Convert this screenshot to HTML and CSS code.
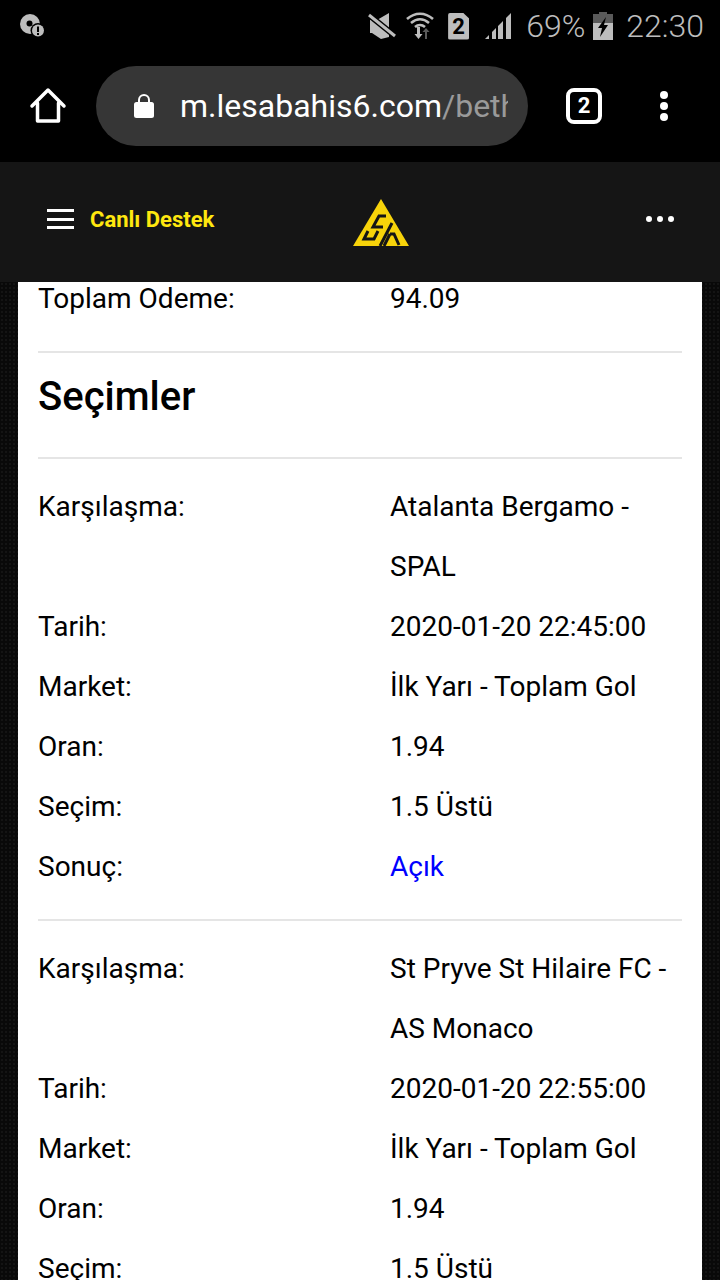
FILE: index.html
```html
<!DOCTYPE html>
<html lang="tr">
  <head>
    <meta charset="UTF-8" />
    <meta name="viewport" content="width=device-width, initial-scale=1.0" />
    <title>Kupon Detayı</title>
    <link rel="stylesheet" href="styles.css">
  </head>
  <body>
    <div class="status-bar">
      <svg class="status-alert" width="28" height="28" viewBox="0 0 28 28">
        <circle cx="11" cy="11" r="10" fill="#bdbdbd" />
        <circle cx="10.500" cy="10.500" r="3" fill="#000" />
        <circle cx="19" cy="17.500" r="7.500" fill="#000" />
        <circle cx="19" cy="17.500" r="6" fill="#bdbdbd" />
        <rect x="18" y="13.500" width="2" height="5.500" fill="#000" />
        <rect x="18" y="20" width="2" height="2" fill="#000" />
      </svg>
      <div class="status-right">
        <svg class="icon-mute" width="28" height="28" viewBox="0 0 28 28">
          <path d="M2 8h7l12-7v24l-8 2-9-6H2z" fill="#bdbdbd" />
          <path d="M1 3l26 21" stroke="#000" stroke-width="6" />
          <path d="M1 3l26 21" stroke="#bdbdbd" stroke-width="3" />
        </svg>
        <svg class="icon-wifi" width="28" height="28" viewBox="0 0 28 28">
          <path d="M1 7c8-7 18-7 26 0M5 11c6-5 12-5 18 0M9 15c3-2.500 7-2.500 10 0" fill="none" stroke="#bdbdbd" stroke-width="2.600" />
          <path d="M11 15h3v7h2.500l-4 5-4-5H11z" fill="#bdbdbd" />
          <path d="M19 27v-7h-2.500l3.500-4 3.500 4H21v7z" fill="#5a5a5a" />
        </svg>
        <div class="sim-card">2</div>
        <svg class="icon-signal" width="28" height="28" viewBox="0 0 28 28">
          <path d="M1 27l4-4v4zM8 27v-7l4-4v11zM14 27V14l5-5v18zM22 27V6l5-5v26z" fill="#bdbdbd" />
        </svg>
        <span class="battery-level">69%</span>
        <svg class="icon-battery" width="20" height="28" viewBox="0 0 20 28">
          <path d="M6 0h8v2h6v26H0V2h6z" fill="#5a5a5a" />
          <path d="M0 11h20v17H0z" fill="#bdbdbd" />
          <path d="M13 5L5 16h4l-2 9 8-12h-4z" fill="#000" />
        </svg>
        <span class="clock">22:30</span>
      </div>
    </div>

    <div class="browser-bar">
      <svg class="home-icon" width="38" height="38" viewBox="0 0 38 38">
        <path d="M3 19L19 3l16 16M8.500 16v18h21V16" fill="none" stroke="#fff" stroke-width="3.500" stroke-linejoin="round" stroke-linecap="round" />
      </svg>
      <div class="url-pill">
        <svg class="lock-icon" width="22" height="28" viewBox="0 0 22 28">
          <path d="M6 12V8a5 5 0 0 1 10 0v4" fill="none" stroke="#fff" stroke-width="2" />
          <rect x="1" y="10" width="20" height="16" rx="2.500" fill="#fff" />
        </svg>
        <div class="url-text">m.lesabahis6.com<span class="url-path">/beth</span></div>
      </div>
      <div class="tab-count">2</div>
      <div class="browser-menu">
        <span></span>
        <span></span>
        <span></span>
      </div>
    </div>

    <header class="site-header">
      <div class="header-left">
        <div class="hamburger">
          <span></span>
          <span></span>
          <span></span>
        </div>
        <span class="live-support">Canlı Destek</span>
      </div>
      <svg class="logo" width="58" height="50" viewBox="0 0 58 50">
        <path d="M29 1L57 48H1z" fill="#f7d30a" />
        <path d="M34 18H27L21 29H31M40 25L28 48M16 33L12 41H22L26 33M38 36H42L47 47M38 36L32 48" fill="none" stroke="#151515" stroke-width="3" />
      </svg>
      <div class="header-dots">
        <span></span>
        <span></span>
        <span></span>
      </div>
    </header>

    <main class="page-bg">
      <div class="card">
        <div class="row total-row">
          <div class="label">Toplam Odeme:</div>
          <div class="value">94.09</div>
        </div>
        <hr />
        <h2>Seçimler</h2>
        <hr />
        <div class="row"><div class="label">Karşılaşma:</div><div class="value">Atalanta Bergamo - SPAL</div></div>
        <div class="row"><div class="label">Tarih:</div><div class="value">2020-01-20 22:45:00</div></div>
        <div class="row"><div class="label">Market:</div><div class="value">İlk Yarı - Toplam Gol</div></div>
        <div class="row"><div class="label">Oran:</div><div class="value">1.94</div></div>
        <div class="row"><div class="label">Seçim:</div><div class="value">1.5 Üstü</div></div>
        <div class="row"><div class="label">Sonuç:</div><div class="value open">Açık</div></div>
        <hr class="selection-line" />
        <div class="row"><div class="label">Karşılaşma:</div><div class="value">St Pryve St Hilaire FC - AS Monaco</div></div>
        <div class="row"><div class="label">Tarih:</div><div class="value">2020-01-20 22:55:00</div></div>
        <div class="row"><div class="label">Market:</div><div class="value">İlk Yarı - Toplam Gol</div></div>
        <div class="row"><div class="label">Oran:</div><div class="value">1.94</div></div>
        <div class="row"><div class="label">Seçim:</div><div class="value">1.5 Üstü</div></div>
      </div>
    </main>
  </body>
</html>
```

FILE: styles.css
```css
html, body {
  margin: 0;
  height: 1280px;
  overflow: hidden;
}

body {
  font-family: Roboto, Arial, sans-serif;
  background-color: #000;
  color: #000;
}

.status-bar {
  height: 52px;
  display: flex;
  justify-content: space-between;
  align-items: center;
  padding: 0 16px 0 19px;
}

.status-alert {
  margin-top: 1px;
}

.status-right {
  display: flex;
  align-items: center;
  color: #bdbdbd;
}

.icon-mute {
  margin-right: 10px;
}

.icon-wifi {
  margin-right: 14px;
}

.sim-card {
  width: 21px;
  height: 27px;
  background-color: #bdbdbd;
  color: #000;
  font-size: 22px;
  font-weight: 700;
  line-height: 27px;
  text-align: center;
  border-radius: 2px;
  margin-right: 15px;
  clip-path: polygon(0 0, 70% 0, 100% 22%, 100% 100%, 0 100%);
}

.battery-level,
.clock {
  font-size: 32px;
  font-weight: 300;
}

.battery-level {
  margin-left: 14px;
  margin-right: 8px;
}

.clock {
  margin-left: 13px;
}

.browser-bar {
  height: 110px;
  display: flex;
  align-items: flex-start;
  padding-top: 14px;
  box-sizing: border-box;
}

.home-icon {
  margin: 21px 0 0 29px;
}

.url-pill {
  width: 432px;
  height: 80px;
  margin-left: 29px;
  background-color: #363636;
  border-radius: 40px;
  display: flex;
  align-items: center;
  box-sizing: border-box;
  padding: 0 20px 0 37px;
}

.lock-icon {
  flex: none;
  margin-right: 25px;
}

.url-text {
  font-size: 32px;
  color: #fff;
  white-space: nowrap;
  overflow: hidden;
}

.url-path {
  color: #9a9a9a;
}

.tab-count {
  width: 28px;
  height: 28px;
  border: 4px solid #fff;
  border-radius: 8px;
  color: #fff;
  font-size: 22px;
  font-weight: 700;
  line-height: 28px;
  text-align: center;
  margin: 22px 0 0 38px;
}

.browser-menu {
  display: flex;
  flex-direction: column;
  gap: 3px;
  margin: 25px 0 0 58px;
}

.browser-menu span {
  width: 8px;
  height: 8px;
  background-color: #fff;
  border-radius: 50%;
}

.site-header {
  height: 120px;
  background-color: #151515;
  display: flex;
  align-items: center;
  padding: 0 46px 6px 47px;
  box-sizing: border-box;
}

.header-left {
  width: 305px;
  display: flex;
  align-items: center;
  gap: 16px;
}

.hamburger {
  display: flex;
  flex-direction: column;
  gap: 5.500px;
}

.hamburger span {
  display: block;
  width: 27px;
  height: 3px;
  background-color: #fff;
}

.live-support {
  color: #ffe70f;
  font-size: 22px;
  font-weight: 700;
  margin-top: 1px;
}

.logo {
  margin-top: 8px;
  filter: blur(0.5px);
}

.header-dots {
  display: flex;
  gap: 5px;
  margin-left: auto;
}

.header-dots span {
  width: 6px;
  height: 6px;
  background-color: #fff;
  border-radius: 50%;
}

.page-bg {
  height: 998px;
  background-color: #090909;
  background-image: radial-gradient(#141414 1px, transparent 1px);
  background-size: 4px 4px;
  padding: 0 18px;
  overflow: hidden;
}

.card {
  background-color: #fff;
  padding: 0 20px;
  height: 998px;
  overflow: hidden;
}

.row {
  display: flex;
  font-size: 28px;
  line-height: 60px;
}

.total-row {
  margin-top: -13px;
}

.label {
  width: 352px;
  flex: none;
}

.value {
  flex: 1;
}

.open {
  color: #0000ff;
}

hr {
  border: none;
  border-top: 2px solid #e5e5e5;
  margin: 22px 0 0;
}

h2 {
  font-size: 40px;
  font-weight: 500;
  line-height: 44px;
  margin: 22px 0 38px;
}

h2 + hr {
  margin: 0 0 18px;
}

.selection-line {
  margin: 22px 0 18px;
}
```
